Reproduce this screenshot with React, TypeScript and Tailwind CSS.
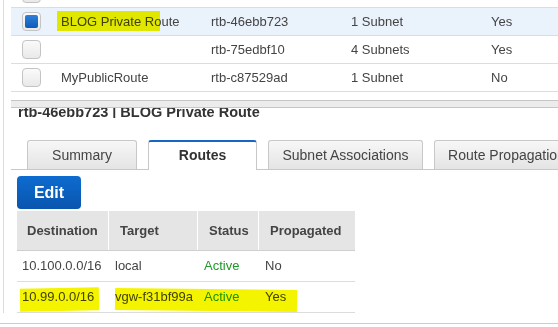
import React from 'react';

type TableRow = {
    name: string;
    id: string;
    subnets: string;
    main: string;
    selected?: boolean;
    marked?: boolean;
};

const tables: TableRow[] = [
    { name: 'BLOG Private Route', id: 'rtb-46ebb723', subnets: '1 Subnet', main: 'Yes', selected: true, marked: true },
    { name: '', id: 'rtb-75edbf10', subnets: '4 Subnets', main: 'Yes' },
    { name: 'MyPublicRoute', id: 'rtb-c87529ad', subnets: '1 Subnet', main: 'No' },
];

function Checkbox({ checked }: { checked?: boolean }) {
    return (
        <div className="flex h-[19px] w-[19px] shrink-0 items-center justify-center rounded-[4px] border border-[#c4c4c4] bg-gradient-to-b from-[#fafafa] to-[#e9e9e9]">
            {checked && <div className="h-[13px] w-[13px] rounded-[2px] bg-gradient-to-b from-[#2f7fd8] to-[#0b5bb8]" />}
        </div>
    );
}

function Tab({ label, active }: { label: string; active?: boolean }) {
    if (active) {
        return (
            <div className="-mb-px flex h-[30px] w-[109px] shrink-0 items-center justify-center rounded-t-[3px] border border-b-0 border-t-2 border-[#c8c8c8] border-t-[#1468c4] bg-white pb-[1px] text-[14px] font-bold text-[#333]">
                {label}
            </div>
        );
    }
    return (
        <div className="flex h-[29px] items-center justify-center rounded-t-[3px] border border-b-0 border-[#c8c8c8] bg-gradient-to-b from-[#f7f7f7] to-[#e4e4e4] text-[14px] text-[#444]">
            {label}
        </div>
    );
}

export default function App() {
    return (
        <div className="h-[327px] w-[558px] overflow-hidden bg-white font-['Liberation_Sans',Arial,sans-serif] text-[13px] text-[#444]">
            <div className="ml-[3px] flex h-[313px] flex-col border-l border-[#dcdcdc]">
                {/* route table list */}
                <div className="ml-[7px]">
                    <div className="-mt-[21px] flex h-[28px] items-center pl-[11px]">
                        <Checkbox />
                    </div>
                    <div className="border-t border-[#dddddd]">
                        {tables.map((t) => (
                            <div
                                key={t.id}
                                className={`flex h-[28px] items-center whitespace-nowrap border-b border-[#dddddd] pl-[11px] ${t.selected ? 'bg-[#eaf2fc]' : ''}`}
                            >
                                <Checkbox checked={t.selected} />
                                <div className="w-[170px] shrink-0 pl-[20px]">
                                    {t.marked ? (
                                        <span className="relative">
                                            <span className="absolute -left-[4px] -top-[3px] h-[20px] w-[103px] bg-[#f4f400] mix-blend-multiply" />
                                            {t.name}
                                        </span>
                                    ) : (
                                        t.name
                                    )}
                                </div>
                                <div className="w-[140px] shrink-0">{t.id}</div>
                                <div className="w-[140px] shrink-0">{t.subnets}</div>
                                <div>{t.main}</div>
                            </div>
                        ))}
                    </div>
                    <div className="mt-[8px] h-[8px] border-y border-[#c6c6c6] bg-[#ececec]" />
                </div>

                {/* detail header, scrolled under the bar */}
                <div className="h-[11px] overflow-hidden">
                    <div className="-mt-[5px] whitespace-nowrap pl-[14px] text-[14.5px] font-bold leading-[18px] text-[#333]">
                        rtb-46ebb723 | BLOG Private Route
                    </div>
                </div>

                {/* tabs */}
                <div className="ml-[7px] mt-[22px] flex items-end gap-[11px] border-b border-[#c8c8c8] pl-[16px]">
                    <div className="w-[110px] shrink-0">
                        <Tab label="Summary" />
                    </div>
                    <Tab label="Routes" active />
                    <div className="w-[155px] shrink-0">
                        <Tab label="Subnet Associations" />
                    </div>
                    <div className="w-[145px] shrink-0">
                        <Tab label="Route Propagation" />
                    </div>
                </div>

                <div className="pl-[13px] pt-[6px]">
                    <button className="h-[33px] w-[64px] rounded-[4px] bg-gradient-to-b from-[#0d6cd0] to-[#0a55ae] text-[16px] font-bold text-white">
                        Edit
                    </button>

                    <div className="mt-[2px] w-[338px] whitespace-nowrap">
                        <div className="grid h-[40px] grid-cols-[92px_89px_61px_96px] border-b border-[#cfcfcf] bg-[#e5e5e5] font-bold text-[#444]">
                            <div className="flex items-center border-r border-white pl-[10px]">Destination</div>
                            <div className="flex items-center border-r border-white pl-[11px]">Target</div>
                            <div className="flex items-center border-r border-white pl-[11px]">Status</div>
                            <div className="flex items-center pl-[11px]">Propagated</div>
                        </div>
                        <div className="grid h-[31px] grid-cols-[92px_89px_61px_96px] items-center border-b border-[#dddddd]">
                            <div className="pl-[5px]">10.100.0.0/16</div>
                            <div className="pl-[6px]">local</div>
                            <div className="pl-[6px] text-[#1d9a2a]">Active</div>
                            <div className="pl-[6px]">No</div>
                        </div>
                        <div className="relative grid h-[31px] grid-cols-[92px_89px_61px_96px] items-center border-b border-[#dddddd]">
                            <span className="pointer-events-none absolute left-[3px] top-[6px] h-[23px] w-[79px] -rotate-1 bg-[#f4f400] mix-blend-multiply" />
                            <span className="pointer-events-none absolute left-[98px] top-[7px] h-[22px] w-[182px] rotate-[0.6deg] bg-[#f4f400] mix-blend-multiply" />
                            <div className="pl-[5px]">10.99.0.0/16</div>
                            <div className="pl-[6px]">vgw-f31bf99a</div>
                            <div className="pl-[6px] text-[#1d9a2a]">Active</div>
                            <div className="pl-[6px]">Yes</div>
                        </div>
                    </div>
                </div>
            </div>
            <div className="mt-[10px] border-t border-[#cccccc]" />
        </div>
    );
}
